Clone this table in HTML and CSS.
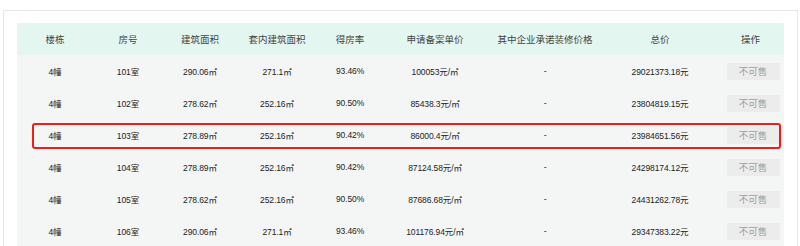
FILE: index.html
```html
<!DOCTYPE html>
<html lang="zh">
<head>
<meta charset="utf-8">
<title>房源列表</title>
<link rel="stylesheet" href="styles.css">
</head>
<body>
<div class="panel">
  <div class="table">
    <div class="row head">
      <div>楼栋</div><div>房号</div><div>建筑面积</div><div>套内建筑面积</div><div>得房率</div><div>申请备案单价</div><div>其中企业承诺装修价格</div><div>总价</div><div>操作</div>
    </div>
    <div class="row">
      <div>4幢</div><div>101室</div><div>290.06㎡</div><div>271.1㎡</div><div>93.46%</div><div>100053元/㎡</div><div>-</div><div>29021373.18元</div><div><span class="btn">不可售</span></div>
    </div>
    <div class="row">
      <div>4幢</div><div>102室</div><div>278.62㎡</div><div>252.16㎡</div><div>90.50%</div><div>85438.3元/㎡</div><div>-</div><div>23804819.15元</div><div><span class="btn">不可售</span></div>
    </div>
    <div class="row marked">
      <div>4幢</div><div>103室</div><div>278.89㎡</div><div>252.16㎡</div><div>90.42%</div><div>86000.4元/㎡</div><div>-</div><div>23984651.56元</div><div><span class="btn">不可售</span></div>
      <span class="highlight"></span>
    </div>
    <div class="row">
      <div>4幢</div><div>104室</div><div>278.89㎡</div><div>252.16㎡</div><div>90.42%</div><div>87124.58元/㎡</div><div>-</div><div>24298174.12元</div><div><span class="btn">不可售</span></div>
    </div>
    <div class="row">
      <div>4幢</div><div>105室</div><div>278.62㎡</div><div>252.16㎡</div><div>90.50%</div><div>87686.68元/㎡</div><div>-</div><div>24431262.78元</div><div><span class="btn">不可售</span></div>
    </div>
    <div class="row">
      <div>4幢</div><div>106室</div><div>290.06㎡</div><div>271.1㎡</div><div>93.46%</div><div>101176.94元/㎡</div><div>-</div><div>29347383.22元</div><div><span class="btn">不可售</span></div>
    </div>
  </div>
</div>
</body>
</html>
```

FILE: styles.css
```css
html, body {
  margin: 0;
  padding: 0;
  background: #ffffff;
}
body {
  font-family: "Liberation Sans", "Noto Sans CJK SC", sans-serif;
  color: #333333;
}
.panel {
  box-sizing: border-box;
  width: 795px;
  margin: 10px 0 0 3px;
  padding: 12px 12px 0 13px;
  border: 1px solid #e6e6e6;
  border-bottom: none;
  background: #ffffff;
}
.table {
  width: 767px;
}
.row {
  position: relative;
  display: grid;
  grid-template-columns: 76px 70px 74px 80px 66px 104px 116px 114px 67px;
  height: 32px;
  align-items: center;
  background: #f4f6f6;
  font-size: 8.5px;
  letter-spacing: -0.1px;
  color: #222222;
}
.row > div {
  text-align: center;
  white-space: nowrap;
}
.row.head {
  background: #e3f6f0;
  font-family: "Noto Sans CJK SC", sans-serif;
  font-size: 9.5px;
  letter-spacing: 0;
  color: #444444;
}
.btn {
  display: inline-block;
  width: 53px;
  height: 17px;
  line-height: 17px;
  background: #ececec;
  color: #a0a0a0;
  font-family: "Noto Sans CJK SC", sans-serif;
  font-size: 9.5px;
  letter-spacing: 0;
  margin-left: 5px;
}
.highlight {
  position: absolute;
  left: 15px;
  right: 3px;
  top: 4px;
  bottom: 2px;
  border: 2px solid #f21c1c;
  border-radius: 3px;
  pointer-events: none;
}
```
